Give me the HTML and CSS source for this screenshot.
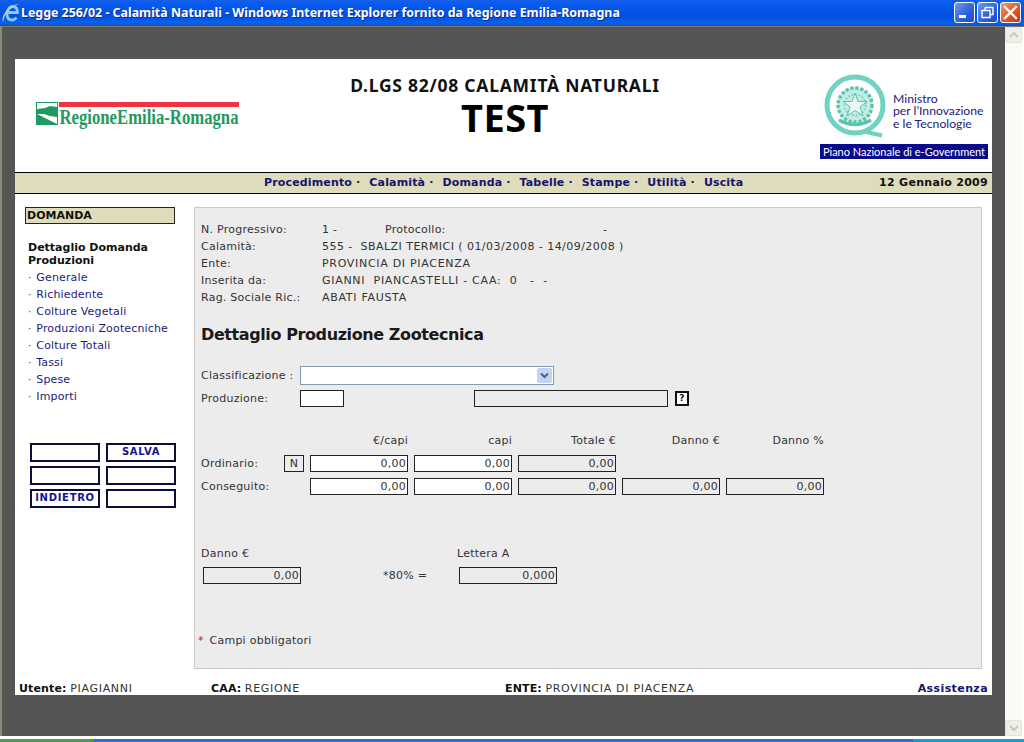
FILE: index.html
```html
<!DOCTYPE html>
<html lang="it">
<head>
<meta charset="utf-8">
<title>Legge 256/02 - Calamità Naturali</title>
<link rel="stylesheet" href="styles.css">
</head>
<body>
<div class="titlebar">
  <svg class="ie-icon" width="19" height="22" viewBox="0 0 19 22">
    <path d="M7 10.500h9.500c0-4-2.200-6-5-6s-5.500 3-5.500 7.500 2.500 6 5 6c2 0 3.500-1 4.500-2.500" fill="none" stroke="#8ac8f6" stroke-width="2.8"/>
    <path d="M2 20C0 14 7 3 18 2 12 4 6 9 3.500 15z" fill="#cfc994"/>
  </svg>
  <span class="title-text">Legge 256/02 - Calamità Naturali - Windows Internet Explorer fornito da Regione Emilia-Romagna</span>
  <div class="win-buttons">
    <div class="win-btn">
      <svg width="21" height="21" viewBox="0 0 21 21"><rect x="5" y="13" width="7" height="3" fill="#fff"/></svg>
    </div>
    <div class="win-btn">
      <svg width="21" height="21" viewBox="0 0 21 21"><path d="M8 5.500h8v7h-3M8 5.500v3M5 8.500h8v7H5z" fill="none" stroke="#fff" stroke-width="1.4"/></svg>
    </div>
    <div class="win-btn win-close">
      <svg width="21" height="21" viewBox="0 0 21 21"><path d="M5 5l11 11M16 5L5 16" stroke="#fff" stroke-width="2.4" stroke-linecap="square"/></svg>
    </div>
  </div>
</div>

<div class="client">
  <div class="viewport">
    <div class="page">
      <header class="masthead">
        <svg class="logo-rer" width="206" height="34" viewBox="0 0 206 34">
          <rect x="23" y="0" width="180" height="5" fill="#ef3340"/>
          <rect x="0.500" y="0.500" width="21" height="22" fill="#fff" stroke="#1f9a63"/>
          <path d="M1 7l8-1 5-2 7 1v10l-7-1-6-2-7 0zM1 12l20 10H1z" fill="#1f9a63"/>
          <text x="23.500" y="22" textLength="179" lengthAdjust="spacingAndGlyphs" class="rer-text">RegioneEmilia-Romagna</text>
        </svg>
        <div class="mast-title">
          <div class="mast-line">D.LGS 82/08 CALAMITÀ NATURALI</div>
          <div class="mast-test">TEST</div>
        </div>
        <div class="logo-min">
          <div class="min-top">
            <svg width="68" height="68" viewBox="0 0 68 68">
              <circle cx="31" cy="32" r="28" fill="none" stroke="#6fd2c2" stroke-width="5"/>
              <path d="M40 58.500l18 4" stroke="#6fd2c2" stroke-width="4"/>
              <circle cx="31" cy="32" r="18" fill="#c4ece4"/>
              <circle cx="31" cy="32" r="17" fill="none" stroke="#58c4b0" stroke-width="3.500" stroke-dasharray="3 2"/>
              <circle cx="31" cy="32" r="10.500" fill="none" stroke="#7fd4c4" stroke-width="2" stroke-dasharray="2 1.500"/>
              <path d="M31 20l3 8.500h9l-7 5.500 3 9-8-5.500-8 5.500 3-9-7-5.500h9z" fill="#eaf8f5" stroke="#58c4b0"/>
              <path d="M15 47q16 9 32 0" fill="none" stroke="#58c4b0" stroke-width="3.500"/>
            </svg>
            <div class="min-text">Ministro<br>per l’Innovazione<br>e le Tecnologie</div>
          </div>
          <div class="min-band">Piano Nazionale di e-Government</div>
        </div>
      </header>

      <nav class="menubar">
        <div class="menu-items">
          <a>Procedimento ·</a><a>Calamità ·</a><a>Domanda ·</a><a>Tabelle ·</a><a>Stampe ·</a><a>Utilità ·</a><a>Uscita</a>
        </div>
        <div class="menu-date">12 Gennaio 2009</div>
      </nav>

      <div class="body-row">
        <aside class="side">
          <div class="side-head">DOMANDA</div>
          <div class="side-title">Dettaglio Domanda Produzioni</div>
          <ul class="side-list">
            <li>Generale</li><li>Richiedente</li><li>Colture Vegetali</li><li>Produzioni Zootecniche</li>
            <li>Colture Totali</li><li>Tassi</li><li>Spese</li><li>Importi</li>
          </ul>
          <div class="side-btns">
            <div class="sbtn"></div><div class="sbtn">SALVA</div>
            <div class="sbtn"></div><div class="sbtn"></div>
            <div class="sbtn">INDIETRO</div><div class="sbtn"></div>
          </div>
        </aside>

        <main class="panel">
          <div class="info">
            <div>N. Progressivo:</div><div class="info-prog"><span class="p1">1 -</span><span class="p2">Protocollo:</span><span>-</span></div>
            <div>Calamità:</div><div class="mixed">555 -&nbsp; SBALZI TERMICI ( 01/03/2008 - 14/09/2008 )</div>
            <div>Ente:</div><div class="caps">PROVINCIA DI PIACENZA</div>
            <div>Inserita da:</div><div class="caps">GIANNI&nbsp; PIANCASTELLI - CAA:&nbsp; 0&nbsp; &nbsp;-&nbsp; -</div>
            <div>Rag. Sociale Ric.:</div><div class="caps">ABATI FAUSTA</div>
          </div>
          <h1 class="panel-title">Dettaglio Produzione Zootecnica</h1>

          <div class="row-class">
            <label class="lbl-class">Classificazione :</label>
            <div class="select"><svg class="select-arrow" width="15" height="15" viewBox="0 0 15 15"><rect width="15" height="15" rx="2" fill="#c3d3f3"/><path d="M4 5.500l3.500 3.500L11 5.500" fill="none" stroke="#4d6185" stroke-width="2"/></svg></div>
          </div>
          <div class="row-prod">
            <label class="lbl-class">Produzione:</label>
            <div class="field f-prod"></div>
            <div class="field grey f-desc"></div>
            <div class="qbtn">?</div>
          </div>

          <div class="grid">
            <div class="gh c1">€/capi</div><div class="gh c2">capi</div><div class="gh c3">Totale €</div><div class="gh c4">Danno €</div><div class="gh c5">Danno %</div>

            <div class="glabel">Ordinario:</div><div class="nbox">N</div>
            <div class="field num">0,00</div><div class="field num">0,00</div><div class="field num grey">0,00</div><div></div><div></div>

            <div class="glabel span2">Conseguito:</div>
            <div class="field num">0,00</div><div class="field num">0,00</div><div class="field num grey">0,00</div><div class="field num grey">0,00</div><div class="field num grey">0,00</div>
          </div>

          <div class="danno">
            <div class="danno-lbl">Danno €</div><div></div><div class="danno-lbl">Lettera A</div>
            <div class="field num grey">0,00</div><div class="pct">*80% =</div><div class="field num grey">0,000</div>
          </div>

          <div class="required"><span class="star">*</span> Campi obbligatori</div>
        </main>
      </div>

      <footer class="foot">
        <div class="foot-1"><b>Utente:</b> <span class="caps">PIAGIANNI</span></div>
        <div class="foot-2"><b>CAA:</b> <span class="caps">REGIONE</span></div>
        <div class="foot-3"><b>ENTE:</b> <span class="caps">PROVINCIA DI PIACENZA</span></div>
        <div class="foot-4">Assistenza</div>
      </footer>
    </div>
  </div>
  <div class="scrollbar">
    <div class="sb-btn"><svg width="12" height="8" viewBox="0 0 12 8"><path d="M2 6l4-4 4 4" fill="none" stroke="#c8c8c0" stroke-width="2"/></svg></div>
    <div class="sb-btn"><svg width="12" height="8" viewBox="0 0 12 8"><path d="M2 2l4 4 4-4" fill="none" stroke="#c8c8c0" stroke-width="2"/></svg></div>
  </div>
</div>
<div class="taskbar"><div class="start"></div><div class="tray"></div></div>
</body>
</html>
```
FILE: styles.css
```css
* { box-sizing: border-box; }
html, body { margin: 0; padding: 0; }
body {
  width: 1024px; height: 742px; overflow: hidden;
  display: flex; flex-direction: column;
  background: #fff;
  font: 11px/14px "DejaVu Sans", Verdana, sans-serif;
  color: #333;
}
.caps { letter-spacing: 0.7px; }
.mixed { letter-spacing: 0.45px; }
.titlebar {
  height: 26px; flex: none;
  display: flex; align-items: center;
  padding: 0 3px 0 1px;
  background: linear-gradient(#1a62e6 0, #0a5cf0 8%, #0050e0 60%, #0a60ee 88%, #0b4fc8 100%);
}
.ie-icon { flex: none; margin-right: 1px; }
.title-text {
  flex: 1;
  font: bold 12.400px/16px "Noto Sans", sans-serif;
  color: #fff;
  text-shadow: 1px 1px 0 #0a2c90;
  white-space: nowrap;
}
.win-buttons { display: flex; gap: 2px; margin-top: -1px; }
.win-btn {
  width: 21px; height: 21px;
  border: 1px solid #fff; border-radius: 3px;
  background: linear-gradient(135deg, #6f9cf0, #2a5fdc 60%, #1d4cc0);
  overflow: hidden;
}
.win-btn svg { display: block; margin: -1px; }
.win-close { background: linear-gradient(135deg, #ee9a78, #d9532c 60%, #b83a1a); }

.client {
  flex: 1; min-height: 0;
  display: flex;
  border-left: 2px solid #8a8a78;
  border-top: 1px solid #7a7a6c;
  background: #fff;
}
.viewport {
  width: 1003px;
  height: 709px;
  padding: 32px 13px 41px 13px;
  background: #555;
}
.page {
  width: 977px; height: 636px; overflow: hidden;
  background: #fff;
}
.scrollbar {
  width: 17px; height: 709px; margin-right: 2px;
  display: flex; flex-direction: column; justify-content: space-between;
  background: #fbfbf6;
}
.sb-btn {
  height: 16px;
  display: flex; align-items: center; justify-content: center;
  background: #efefe8;
  border: 1px solid #e2e2da;
  border-radius: 2px;
}
.taskbar {
  height: 3px; flex: none; margin-top: 3px;
  display: flex;
  background: #2a6fd8;
}
.start { width: 94px; background: #4a9a50; }
.tray { margin-left: auto; width: 111px; background: #159ae6; }

/* masthead */
.masthead { height: 113px; display: flex; }
.logo-rer { flex: none; margin: 43px 0 0 21px; }
.rer-text { font: bold 22px "Liberation Serif", serif; fill: #1f9a63; }
.mast-title { width: 526px; text-align: center; color: #000; padding-top: 15px; }
.mast-line { font: bold 17.500px/22px "Noto Sans", sans-serif; letter-spacing: 0.75px; color: #111; }
.mast-test { font: bold 38px/42px "Noto Sans", sans-serif; letter-spacing: 0.5px; }
.logo-min { width: 168px; margin-left: 52px; padding-top: 14px; flex: none; }
.min-top { display: flex; align-items: center; height: 68px; margin-left: 4px; }
.min-top svg { flex: none; }
.min-text {
  font: 12.200px/12.500px "Lato", sans-serif;
  color: #1e1a78;
  margin: 9px 0 0 1px;
  white-space: nowrap;
}
.min-band {
  margin-top: 3px;
  height: 15px;
  background: #0a0a8c;
  color: #fff;
  font: 11px/15px "Lato", sans-serif;
  text-align: center;
  white-space: nowrap;
}

/* menu */
.menubar {
  height: 22px;
  display: flex; align-items: center;
  background: #dedcba;
  border-top: 1px solid #000;
  border-bottom: 1px solid #000;
  font-weight: bold;
}
.menu-items {
  flex: none;
  margin-left: 249px;
  display: flex; gap: 9px;
  color: #14146e;
  letter-spacing: 0.15px;
}
.menu-date { margin-left: auto; padding-right: 4px; color: #111; letter-spacing: 0.3px; }

.body-row { display: flex; height: 476px; }

/* sidebar */
.side { width: 179px; flex: none; padding: 13px 0 0 10px; }
.side-head {
  width: 150px; height: 17px;
  background: #dedcba;
  border: 1px solid #222;
  padding-left: 1px;
  font-weight: bold; line-height: 16px; color: #111;
}
.side-title {
  margin: 17px 0 0 3px;
  width: 140px;
  font-weight: bold; line-height: 13px; color: #111;
}
.side-list { list-style: none; margin: 2px 0 0 3px; padding: 0; letter-spacing: 0.15px; }
.side-list li { line-height: 17px; color: #1e1a78; white-space: nowrap; }
.side-list li::before { content: "· "; color: #555; margin-right: 1px; }
.side-btns {
  display: grid;
  grid-template-columns: 70px 70px;
  grid-auto-rows: 19px;
  gap: 4px 6px;
  margin: 38px 0 0 5px;
}
.sbtn {
  border: 2px solid #0c0c3c;
  text-align: center;
  font: bold 10px/13px "DejaVu Sans", sans-serif;
  color: #14148c;
  letter-spacing: 0.7px;
}

/* panel */
.panel {
  width: 788px; height: 462px;
  margin-top: 13px;
  background: #ececec;
  border: 1px solid #ccccc4;
  padding: 13px 0 0 6px;
  color: #333;
  letter-spacing: 0.25px;
}
.info {
  display: grid;
  grid-template-columns: 121px 1fr;
  grid-auto-rows: 17px;
  line-height: 17px;
  white-space: nowrap;
}
.p1 { display: inline-block; width: 63px; }
.p2 { display: inline-block; width: 218px; }
.panel-title {
  margin: 16px 0 0 0;
  font: bold 16px/26px "DejaVu Sans", sans-serif;
  color: #1a1a1a;
  letter-spacing: -0.4px;
}
.row-class { display: flex; align-items: center; margin-top: 18px; height: 19px; }
.lbl-class { width: 99px; flex: none; }
.select {
  width: 254px; height: 19px;
  background: #fff;
  border: 1px solid #7f9db9;
  position: relative;
}
.select-arrow { position: absolute; right: 1px; top: 1px; }
.row-prod { display: flex; align-items: center; margin-top: 5px; height: 17px; }
.field {
  height: 17px; border: 1px solid #222; background: #fff;
  line-height: 15px;
}
.field.grey { background: #ececec; }
.field.num { text-align: right; padding-right: 1px; }
.f-prod { width: 44px; margin-right: 130px; }
.f-desc { width: 194px; }
.qbtn {
  width: 14px; height: 15px; margin-left: 7px;
  background: #fff; border: 2px solid #111;
  font: bold 9px/11px "DejaVu Sans", sans-serif;
  text-align: center; color: #111;
}
.grid {
  display: grid;
  grid-template-columns: 77px 20px 98px 98px 98px 98px 98px;
  column-gap: 6px;
  grid-auto-rows: 17px;
  row-gap: 6px;
  margin-top: 25px;
  width: 623px;
}
.gh { text-align: right; line-height: 17px; height: 17px; }
.c1 { grid-column: 3; }
.c2 { grid-column: 4; }
.c3 { grid-column: 5; }
.c4 { grid-column: 6; }
.c5 { grid-column: 7; }
.glabel { line-height: 17px; }
.span2 { grid-column: span 2; }
.nbox { border: 1px solid #222; text-align: center; line-height: 15px; height: 17px; }
.danno {
  display: grid;
  grid-template-columns: 98px 158px 98px;
  grid-auto-rows: 17px;
  row-gap: 5px;
  margin: 50px 0 0 2px;
}
.danno-lbl { line-height: 17px; margin-left: -2px; }
.pct { line-height: 17px; padding-left: 82px; }
.required { margin: 50px 0 0 -3px; line-height: 14px; }
.star { color: #c02020; margin-right: 2px; }

/* footer */
.foot { display: flex; height: 25px; padding: 12px 4px 0 4px; color: #333; white-space: nowrap; }
.foot b { color: #111; letter-spacing: 0.15px; }
.foot-1 { width: 192px; }
.foot-2 { width: 294px; }
.foot-3 { flex: 1; }
.foot-4 { font-weight: bold; color: #14146e; letter-spacing: 0.4px; }
```
